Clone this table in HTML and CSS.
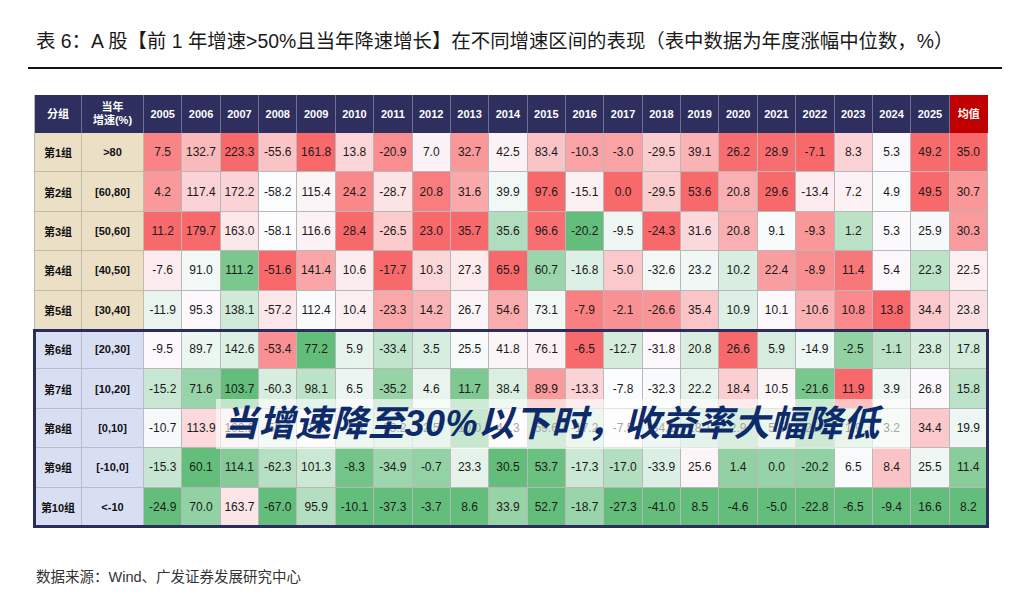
FILE: index.html
```html
<!DOCTYPE html>
<html lang="zh-CN">
<head>
<meta charset="utf-8">
<title>表 6</title>
<link rel="stylesheet" href="styles.css">
</head>
<body>
<div class="page">
  <h1 class="title">表 6：A 股【前 1 年增速&gt;50%且当年降速增长】在不同增速区间的表现（表中数据为年度涨幅中位数，%）</h1>
  <div class="rule"></div>
  <div class="table-wrap">
    <div class="grid">
      <div class="row head">
        <div class="hc">分组</div><div class="hc">当年<br>增速(%)</div>
        <div class="hc">2005</div><div class="hc">2006</div><div class="hc">2007</div><div class="hc">2008</div><div class="hc">2009</div><div class="hc">2010</div><div class="hc">2011</div><div class="hc">2012</div><div class="hc">2013</div><div class="hc">2014</div><div class="hc">2015</div><div class="hc">2016</div><div class="hc">2017</div><div class="hc">2018</div><div class="hc">2019</div><div class="hc">2020</div><div class="hc">2021</div><div class="hc">2022</div><div class="hc">2023</div><div class="hc">2024</div><div class="hc">2025</div><div class="hc avg">均值</div>
      </div>
      <div class="row data hi">
        <div class="lc">第1组</div><div class="lc">&gt;80</div>
        <div class="v">7.5</div><div class="v">132.7</div><div class="v">223.3</div><div class="v">-55.6</div><div class="v">161.8</div><div class="v">13.8</div><div class="v">-20.9</div><div class="v">7.0</div><div class="v">32.7</div><div class="v">42.5</div><div class="v">83.4</div><div class="v">-10.3</div><div class="v">-3.0</div><div class="v">-29.5</div><div class="v">39.1</div><div class="v">26.2</div><div class="v">28.9</div><div class="v">-7.1</div><div class="v">8.3</div><div class="v">5.3</div><div class="v">49.2</div><div class="v">35.0</div>
      </div>
      <div class="row data hi">
        <div class="lc">第2组</div><div class="lc">[60,80]</div>
        <div class="v">4.2</div><div class="v">117.4</div><div class="v">172.2</div><div class="v">-58.2</div><div class="v">115.4</div><div class="v">24.2</div><div class="v">-28.7</div><div class="v">20.8</div><div class="v">31.6</div><div class="v">39.9</div><div class="v">97.6</div><div class="v">-15.1</div><div class="v">0.0</div><div class="v">-29.5</div><div class="v">53.6</div><div class="v">20.8</div><div class="v">29.6</div><div class="v">-13.4</div><div class="v">7.2</div><div class="v">4.9</div><div class="v">49.5</div><div class="v">30.7</div>
      </div>
      <div class="row data hi">
        <div class="lc">第3组</div><div class="lc">[50,60]</div>
        <div class="v">11.2</div><div class="v">179.7</div><div class="v">163.0</div><div class="v">-58.1</div><div class="v">116.6</div><div class="v">28.4</div><div class="v">-26.5</div><div class="v">23.0</div><div class="v">35.7</div><div class="v">35.6</div><div class="v">96.6</div><div class="v">-20.2</div><div class="v">-9.5</div><div class="v">-24.3</div><div class="v">31.6</div><div class="v">20.8</div><div class="v">9.1</div><div class="v">-9.3</div><div class="v">1.2</div><div class="v">5.3</div><div class="v">25.9</div><div class="v">30.3</div>
      </div>
      <div class="row data hi">
        <div class="lc">第4组</div><div class="lc">[40,50]</div>
        <div class="v">-7.6</div><div class="v">91.0</div><div class="v">111.2</div><div class="v">-51.6</div><div class="v">141.4</div><div class="v">10.6</div><div class="v">-17.7</div><div class="v">10.3</div><div class="v">27.3</div><div class="v">65.9</div><div class="v">60.7</div><div class="v">-16.8</div><div class="v">-5.0</div><div class="v">-32.6</div><div class="v">23.2</div><div class="v">10.2</div><div class="v">22.4</div><div class="v">-8.9</div><div class="v">11.4</div><div class="v">5.4</div><div class="v">22.3</div><div class="v">22.5</div>
      </div>
      <div class="row data hi">
        <div class="lc">第5组</div><div class="lc">[30,40]</div>
        <div class="v">-11.9</div><div class="v">95.3</div><div class="v">138.1</div><div class="v">-57.2</div><div class="v">112.4</div><div class="v">10.4</div><div class="v">-23.3</div><div class="v">14.2</div><div class="v">26.7</div><div class="v">54.6</div><div class="v">73.1</div><div class="v">-7.9</div><div class="v">-2.1</div><div class="v">-26.6</div><div class="v">35.4</div><div class="v">10.9</div><div class="v">10.1</div><div class="v">-10.6</div><div class="v">10.8</div><div class="v">13.8</div><div class="v">34.4</div><div class="v">23.8</div>
      </div>
      <div class="row data lo">
        <div class="lc">第6组</div><div class="lc">[20,30]</div>
        <div class="v">-9.5</div><div class="v">89.7</div><div class="v">142.6</div><div class="v">-53.4</div><div class="v">77.2</div><div class="v">5.9</div><div class="v">-33.4</div><div class="v">3.5</div><div class="v">25.5</div><div class="v">41.8</div><div class="v">76.1</div><div class="v">-6.5</div><div class="v">-12.7</div><div class="v">-31.8</div><div class="v">20.8</div><div class="v">26.6</div><div class="v">5.9</div><div class="v">-14.9</div><div class="v">-2.5</div><div class="v">-1.1</div><div class="v">23.8</div><div class="v">17.8</div>
      </div>
      <div class="row data lo">
        <div class="lc">第7组</div><div class="lc">[10,20]</div>
        <div class="v">-15.2</div><div class="v">71.6</div><div class="v">103.7</div><div class="v">-60.3</div><div class="v">98.1</div><div class="v">6.5</div><div class="v">-35.2</div><div class="v">4.6</div><div class="v">11.7</div><div class="v">38.4</div><div class="v">89.9</div><div class="v">-13.3</div><div class="v">-7.8</div><div class="v">-32.3</div><div class="v">22.2</div><div class="v">18.4</div><div class="v">10.5</div><div class="v">-21.6</div><div class="v">11.9</div><div class="v">3.9</div><div class="v">26.8</div><div class="v">15.8</div>
      </div>
      <div class="row data lo">
        <div class="lc">第8组</div><div class="lc">[0,10]</div>
        <div class="v">-10.7</div><div class="v">113.9</div><div class="v">162.2</div><div class="v">-59.6</div><div class="v">113.5</div><div class="v">3.6</div><div class="v">-33.2</div><div class="v">2.5</div><div class="v">10.0</div><div class="v">41.3</div><div class="v">59.6</div><div class="v">-17.2</div><div class="v">-7.5</div><div class="v">-34.1</div><div class="v">18.1</div><div class="v">2.9</div><div class="v">5.5</div><div class="v">-21.2</div><div class="v">1.9</div><div class="v">3.2</div><div class="v">34.4</div><div class="v">19.9</div>
      </div>
      <div class="row data lo">
        <div class="lc">第9组</div><div class="lc">[-10,0]</div>
        <div class="v">-15.3</div><div class="v">60.1</div><div class="v">114.1</div><div class="v">-62.3</div><div class="v">101.3</div><div class="v">-8.3</div><div class="v">-34.9</div><div class="v">-0.7</div><div class="v">23.3</div><div class="v">30.5</div><div class="v">53.7</div><div class="v">-17.3</div><div class="v">-17.0</div><div class="v">-33.9</div><div class="v">25.6</div><div class="v">1.4</div><div class="v">0.0</div><div class="v">-20.2</div><div class="v">6.5</div><div class="v">8.4</div><div class="v">25.5</div><div class="v">11.4</div>
      </div>
      <div class="row data lo">
        <div class="lc">第10组</div><div class="lc">&lt;-10</div>
        <div class="v">-24.9</div><div class="v">70.0</div><div class="v">163.7</div><div class="v">-67.0</div><div class="v">95.9</div><div class="v">-10.1</div><div class="v">-37.3</div><div class="v">-3.7</div><div class="v">8.6</div><div class="v">33.9</div><div class="v">52.7</div><div class="v">-18.7</div><div class="v">-27.3</div><div class="v">-41.0</div><div class="v">8.5</div><div class="v">-4.6</div><div class="v">-5.0</div><div class="v">-22.8</div><div class="v">-6.5</div><div class="v">-9.4</div><div class="v">16.6</div><div class="v">8.2</div>
      </div>
    </div>
    <div class="highlight"></div>
    <div class="callout">当增速降至30%以下时，收益率大幅降低</div>
  </div>
  <p class="source">数据来源：Wind、广发证券发展研究中心</p>
</div>
<script src="script.js"></script>
</body>
</html>
```

FILE: styles.css
```css
* {
  box-sizing: border-box;
  margin: 0;
  padding: 0;
}

html, body {
  background: #ffffff;
}

body {
  width: 1024px;
  height: 598px;
  overflow: hidden;
  font-family: "Liberation Sans", Arial, "Noto Sans CJK SC", sans-serif;
  color: #1a1a1a;
}

.page {
  padding: 28px 22px 0 28px;
}

.title {
  font-size: 19.4px;
  font-weight: normal;
  line-height: 26px;
  margin-left: 8px;
  color: #1a1a1a;
  white-space: nowrap;
}

.rule {
  width: 974px;
  height: 2px;
  margin-top: 13px;
  background: #111111;
}

.table-wrap {
  position: relative;
  width: 954px;
  margin: 26px 0 0 6px;
}

.grid {
  display: grid;
  grid-template-columns: 47px 62px repeat(22, 1fr);
  grid-template-rows: 38px repeat(10, 39.4px);
  border-left: 1px solid #b8b8b8;
}

.row {
  display: contents;
}

.hc {
  display: flex;
  align-items: center;
  justify-content: center;
  text-align: center;
  background: #2e2f5e;
  color: #ffffff;
  font-size: 11px;
  font-weight: bold;
  line-height: 13px;
  border-right: 1px solid #6f7093;
}

.hc.avg {
  background: #c00000;
  border-right: none;
}

.lc {
  display: flex;
  align-items: center;
  justify-content: center;
  font-size: 11px;
  font-weight: bold;
  color: #111111;
  background: #ebdfc5;
  border-right: 1px solid #c2bba8;
  border-bottom: 1px solid #c2bba8;
}

.row.lo .lc {
  background: #d9dff3;
  border-color: #b9bccb;
}

.v {
  display: flex;
  align-items: center;
  justify-content: center;
  font-size: 12px;
  color: #1a1a1a;
  background: #fcfcff;
  border-right: 1px solid #b8b8b8;
  border-bottom: 1px solid #b8b8b8;
}

.highlight {
  position: absolute;
  left: -1px;
  top: 234px;
  width: 956px;
  height: 199px;
  border: 3px solid #2b2d5c;
  pointer-events: none;
}

.callout {
  position: absolute;
  left: 182px;
  top: 304px;
  width: 694px;
  height: 50px;
  padding-left: 6px;
  background: rgba(255, 255, 255, 0.6);
  color: #0d2a6b;
  font-family: "Liberation Sans", Arial, "Noto Sans CJK SC", sans-serif;
  font-size: 36px;
  font-weight: bold;
  font-style: italic;
  line-height: 50px;
  letter-spacing: 0.5px;
  white-space: nowrap;
}

.source {
  margin: 40px 0 0 8px;
  font-size: 14.5px;
  line-height: 20px;
  color: #333333;
}
```

FILE: script.js
```js
(function () {
  var rows = Array.prototype.slice.call(document.querySelectorAll('.row.data'));
  var cells = rows.map(function (r) {
    return Array.prototype.slice.call(r.querySelectorAll('.v'));
  });
  if (!cells.length) return;
  var G = [99, 190, 123], W = [252, 252, 255], R = [248, 105, 107];
  var ncol = cells[0].length;
  for (var j = 0; j < ncol; j++) {
    var col = cells.map(function (r) { return r[j]; });
    var vals = col.map(function (c) { return parseFloat(c.textContent); });
    var s = vals.slice().sort(function (a, b) { return a - b; });
    var n = s.length;
    var pos = (n - 1) * 0.5, lo = Math.floor(pos), hi = Math.ceil(pos);
    var mid = s[lo] + (s[hi] - s[lo]) * (pos - lo);
    var mn = s[0], mx = s[n - 1];
    col.forEach(function (c, i) {
      var v = vals[i], b, t;
      if (v >= mid) { b = R; t = mx > mid ? (v - mid) / (mx - mid) : 0; }
      else { b = G; t = mid > mn ? (mid - v) / (mid - mn) : 0; }
      var rgb = W.map(function (x, k) { return Math.round(x + (b[k] - x) * t); });
      c.style.backgroundColor = 'rgb(' + rgb.join(',') + ')';
    });
  }
})();
```
